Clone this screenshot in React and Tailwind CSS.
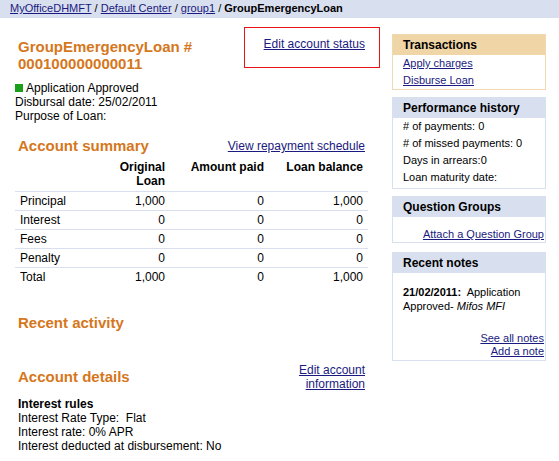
export default function App() {
  const rows = [
    ["Principal", "1,000", "0", "1,000"],
    ["Interest", "0", "0", "0"],
    ["Fees", "0", "0", "0"],
    ["Penalty", "0", "0", "0"],
    ["Total", "1,000", "0", "1,000"],
  ];
  const link = "text-[#1a1a80] underline";
  const heading = "text-[15px] font-bold text-[#d5771c] leading-[18px]";

  return (
    <div className="w-[559px] h-[461px] bg-white text-black overflow-hidden font-['Liberation_Sans',Arial,sans-serif] text-[12px]">
      {/* Breadcrumb */}
      <div className="h-[18px] bg-[#d8dfee] pl-[10px] text-[11px] leading-[17px]">
        <a href="#" className={link}>MyOfficeDHMFT</a> /{" "}
        <a href="#" className={link}>Default Center</a> /{" "}
        <a href="#" className={link}>group1</a> /{" "}
        <span className="font-bold">GroupEmergencyLoan</span>
      </div>

      <div className="flex">
        {/* Left column */}
        <div className="ml-[15px] w-[353px]">
          <div className="flex items-start justify-between mt-[9px]">
            <div className="pl-[3px] mt-[11px] text-[15px] font-bold text-[#d5771c] leading-[17px]">
              GroupEmergencyLoan #
              <br />
              000100000000011
            </div>
            <div className="-mr-[12px] w-[136px] h-[41px] border border-[#e8141a] pt-[9px] pr-[14px] text-right leading-[14px]">
              <a href="#" className={link}>Edit account status</a>
            </div>
          </div>

          <div className="mt-[9px] leading-[14px]">
            <div className="flex items-center">
              <span className="w-[8px] h-[8px] bg-[#1a9f1a] mr-[3px]" />
              Application Approved
            </div>
            <div>Disbursal date: 25/02/2011</div>
            <div>Purpose of Loan:</div>
          </div>

          <div className="flex items-center justify-between mt-[14px] px-[3px]">
            <div className={heading}>Account summary</div>
            <a href="#" className={link}>View repayment schedule</a>
          </div>

          <div>
            <div className="grid grid-cols-[70px_83px_99px_101px] pt-[5px] pb-[3px] font-bold leading-[14px] text-right">
              <div />
              <div className="pr-[3px]">Original<br />Loan</div>
              <div className="pr-[3px]">Amount paid</div>
              <div className="pr-[5px]">Loan balance</div>
            </div>
            {rows.map((r) => (
              <div
                key={r[0]}
                className="grid grid-cols-[70px_83px_99px_101px] h-[19px] border-t border-[#d8dfee] leading-[18px]"
              >
                <div className="pl-[5px]">{r[0]}</div>
                <div className="text-right pr-[3px]">{r[1]}</div>
                <div className="text-right pr-[3px]">{r[2]}</div>
                <div className="text-right pr-[5px]">{r[3]}</div>
              </div>
            ))}
          </div>

          <div className={`${heading} mt-[28px] pl-[3px]`}>Recent activity</div>

          <div className="flex items-start justify-between mt-[31px] px-[3px]">
            <div className={`${heading} mt-[5px]`}>Account details</div>
            <a href="#" className={`${link} text-right leading-[14px]`}>
              Edit account
              <br />
              information
            </a>
          </div>

          <div className="mt-[6px] pl-[3px] leading-[14px]">
            <div className="font-bold">Interest rules</div>
            <div>Interest Rate Type:&nbsp; Flat</div>
            <div>Interest rate: 0% APR</div>
            <div>Interest deducted at disbursement: No</div>
          </div>
        </div>

        {/* Right column */}
        <div className="ml-[24px] w-[154px] mt-[16px] text-[11px]">
          <div className="border border-[#f0d8b0]">
            <div className="h-[20px] bg-[#f0d5a6] px-[10px] text-[12px] font-bold leading-[20px]">
              Transactions
            </div>
            <div className="px-[10px] leading-[17px]">
              <div><a href="#" className={link}>Apply charges</a></div>
              <div><a href="#" className={link}>Disburse Loan</a></div>
            </div>
          </div>

          <div className="mt-[7px] border border-[#d8dfee]">
            <div className="h-[20px] bg-[#d8dfee] px-[10px] text-[12px] font-bold leading-[20px]">
              Performance history
            </div>
            <div className="px-[10px] pb-[2px] leading-[17px]">
              <div># of payments: 0</div>
              <div># of missed payments: 0</div>
              <div>Days in arrears:0</div>
              <div>Loan maturity date:</div>
            </div>
          </div>

          <div className="mt-[7px] border border-[#d8dfee]">
            <div className="h-[20px] bg-[#d8dfee] px-[10px] text-[12px] font-bold leading-[20px]">
              Question Groups
            </div>
            <div className="pt-[10px] pb-[1px] pr-[1px] text-right leading-[14px]">
              <a href="#" className={link}>Attach a Question Group</a>
            </div>
          </div>

          <div className="mt-[9px] border border-[#d8dfee]">
            <div className="h-[20px] bg-[#d8dfee] px-[10px] text-[12px] font-bold leading-[20px]">
              Recent notes
            </div>
            <div className="pt-[12px] px-[10px] leading-[14px]">
              <span className="font-bold">21/02/2011:</span>&nbsp; Application
              <br />
              Approved- <i>Mifos MFI</i>
            </div>
            <div className="mt-[19px] pb-[2px] pr-[1px] text-right leading-[13px]">
              <div><a href="#" className={link}>See all notes</a></div>
              <div><a href="#" className={link}>Add a note</a></div>
            </div>
          </div>
        </div>
      </div>
    </div>
  );
}
